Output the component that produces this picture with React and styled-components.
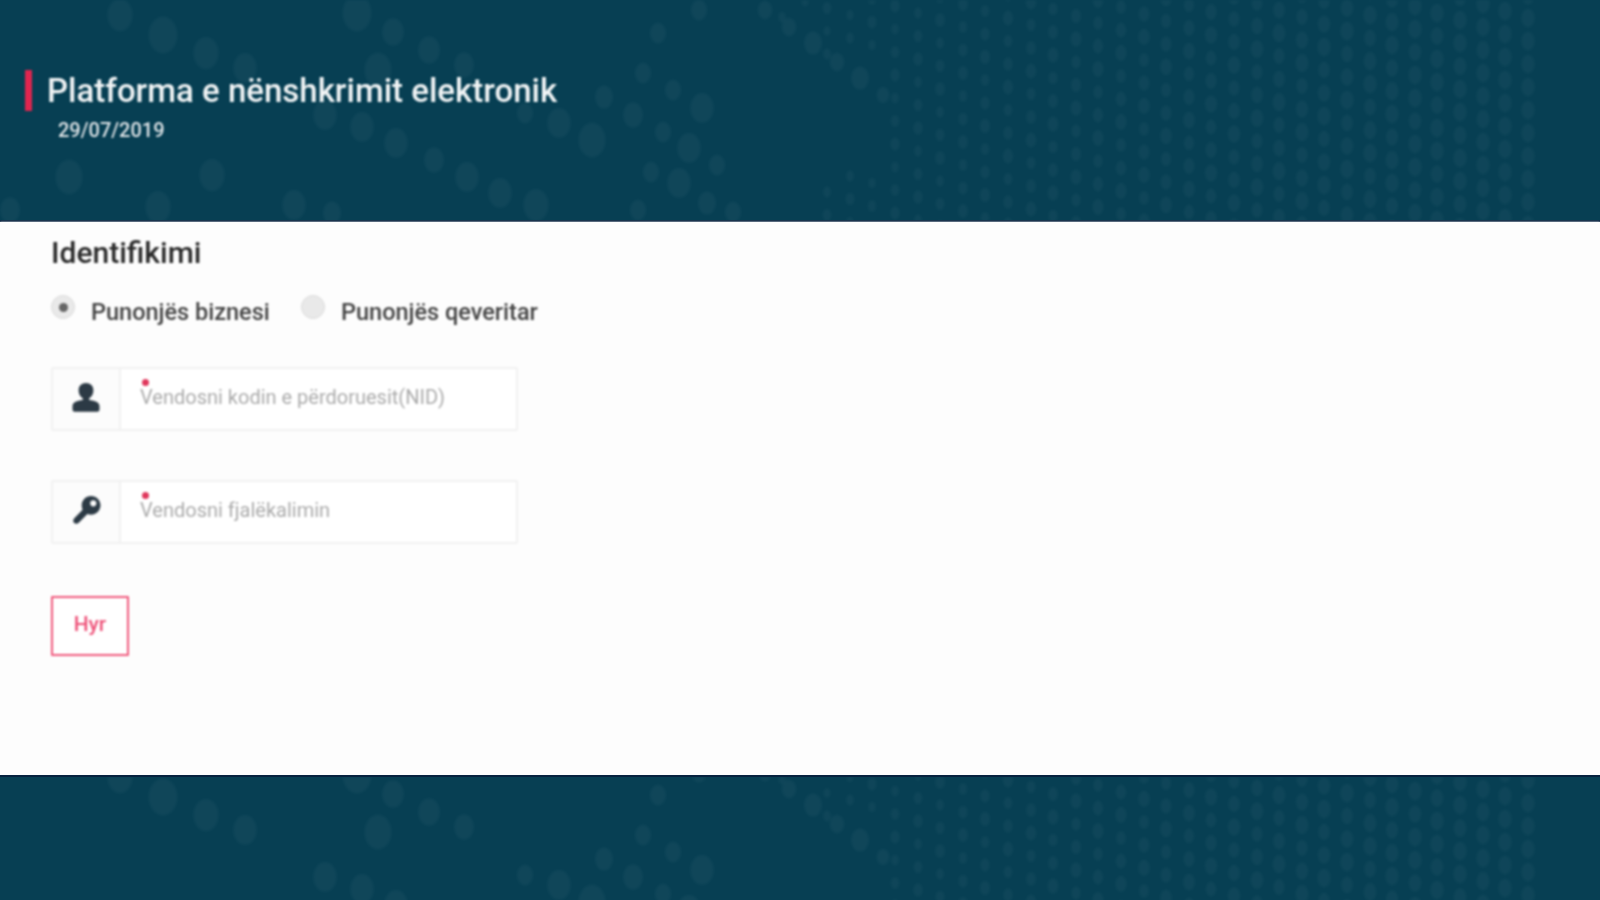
import React from "react";
import styled, { createGlobalStyle } from "styled-components";

const GlobalStyle = createGlobalStyle`
  html, body {
    margin: 0;
    padding: 0;
    height: 100%;
    background: #fdfdfd;
    font-family: Roboto, "Liberation Sans", sans-serif;
  }
`;

const Page = styled.div`
  display: flex;
  flex-direction: column;
  height: 900px;
  overflow: hidden;
`;

const Band = styled.div`
  position: relative;
  flex: none;
  box-sizing: border-box;
  height: ${(props) => props.$height}px;
  overflow: hidden;
  background-color: #073f53;
  ${(props) => props.$edge}: 2px solid #06223f;
`;

const Dots = styled.svg`
  position: absolute;
  top: 0;
  left: 0;
  width: 1600px;
  height: 240px;
  filter: blur(1.5px);
`;

const Heading = styled.div`
  position: relative;
  padding: 70px 0 0 25px;
  filter: blur(0.8px);
`;

const TitleRow = styled.div`
  display: flex;
  align-items: center;
  height: 41px;
  border-left: 7px solid #e0254f;
  padding-left: 15px;
`;

const Title = styled.h1`
  margin: 0;
  font-size: 33px;
  line-height: 38px;
  font-weight: 500;
  color: #f2f5f6;
  white-space: nowrap;
`;

const DateText = styled.div`
  margin: 8px 0 0 33px;
  font-size: 20px;
  line-height: 22px;
  font-weight: 500;
  color: #dfe5e8;
`;

const Main = styled.main`
  flex: 1;
  padding: 14px 0 0 51px;
  background: #fdfdfd;
  filter: blur(0.8px);
`;

const SectionTitle = styled.h2`
  margin: 0;
  font-size: 30px;
  line-height: 34px;
  font-weight: 500;
  color: #2a2a2a;
`;

const RadioRow = styled.div`
  display: flex;
  margin-top: 25px;
  height: 33px;
`;

const RadioLabel = styled.label`
  display: flex;
  align-items: flex-start;
  width: ${(props) => props.$width}px;
  font-size: 23.5px;
  line-height: 28px;
  font-weight: 500;
  color: #444;
`;

const RadioDot = styled.span`
  flex: none;
  width: 24px;
  height: 24px;
  margin: 0 16px 0 0;
  box-sizing: border-box;
  border-radius: 50%;
  border: 1px solid #dcdcdc;
  background: #e9e9e9;
  display: flex;
  align-items: center;
  justify-content: center;
  &::after {
    content: "";
    display: ${(props) => (props.$checked ? "block" : "none")};
    width: 9px;
    height: 9px;
    border-radius: 50%;
    background: #666;
  }
`;

const RadioText = styled.span`
  margin-top: 3px;
`;

const Fields = styled.div`
  display: flex;
  flex-direction: column;
  gap: 49px;
  margin-top: 39px;
`;

const Field = styled.div`
  display: flex;
  width: 467px;
  height: 64px;
  box-sizing: border-box;
  border: 2px solid #f1f1f1;
  border-radius: 2px;
  background: #fff;
`;

const Addon = styled.div`
  flex: none;
  width: 68px;
  display: flex;
  align-items: center;
  justify-content: center;
  padding-bottom: 4px;
  box-sizing: border-box;
  border-right: 2px solid #f1f1f1;
  background: #fcfcfc;
  color: #2c3a45;
`;

const FieldBody = styled.div`
  position: relative;
  flex: 1;
  padding: 15px 0 0 19px;
`;

const FieldLabel = styled.label`
  display: block;
  font-size: 20px;
  line-height: 26px;
  color: #ababab;
`;

const Star = styled.span`
  position: absolute;
  left: 21px;
  top: 10px;
  width: 7px;
  height: 7px;
  border-radius: 50%;
  background: #e0375c;
`;

const LoginButton = styled.button`
  display: block;
  margin-top: 52px;
  width: 78px;
  height: 60px;
  padding: 0 0 4px;
  border: 2px solid #f0587c;
  border-radius: 1px;
  background: #fff;
  font-family: inherit;
  font-size: 21px;
  font-weight: 500;
  color: #ee5178;
`;

// big loose dots on the left of the banner art: x, y, radius
const LOOSE_DOTS = [
  [120, 15, 14], [163, 35, 16], [206, 53, 14], [245, 68, 13], [357, 13, 16],
  [393, 32, 12], [429, 50, 12], [464, 65, 11], [378, 70, 15], [325, 115, 13],
  [362, 127, 13], [396, 143, 13], [434, 160, 11], [467, 177, 13], [500, 193, 13],
  [536, 205, 14], [69, 177, 15], [212, 175, 14], [158, 207, 14], [294, 205, 13],
  [332, 213, 10], [10, 210, 11], [643, 73, 9], [604, 97, 10], [673, 90, 9],
  [633, 115, 11], [702, 108, 13], [663, 132, 9], [559, 123, 13], [592, 140, 15],
  [525, 113, 9], [689, 148, 13], [717, 165, 9], [651, 172, 9], [679, 183, 13],
  [707, 203, 10], [638, 210, 9], [733, 212, 9], [658, 33, 9], [699, 10, 9],
  [765, 10, 8], [789, 27, 8], [813, 43, 10], [837, 62, 8], [860, 78, 10], [883, 95, 7],
];

// denser small dots that fill the right side, growing a little toward the edge
function denseDots() {
  const out = [];
  for (let col = 0; col < 34; col++) {
    const x = 782 + col * 22.6;
    for (let row = -1; row < 11; row++) {
      const y = row * 23 + ((col * 7) % 23) - 6;
      // diagonal gap left of the dense area, mid-height
      if (x < 890 && y > 60 && y < 175) continue;
      if (x < 810 && y > 20) continue;
      const r = Math.min(8, 4 + col * 0.12 + ((col + row) % 3) * 0.5);
      out.push([Math.round(x), y, r]);
    }
  }
  return out;
}

const DENSE = denseDots();

function DotArt({ shift }) {
  return (
    <Dots viewBox="0 0 1600 240" aria-hidden="true">
      {LOOSE_DOTS.map(([x, y, r], i) => (
        <ellipse key={i} cx={x} cy={y + shift} rx={r * 0.9} ry={r * 1.15} fill="#ffffff" fillOpacity="0.04" />
      ))}
      {DENSE.map(([x, y, r], i) => (
        <ellipse key={i} cx={x} cy={y + shift} rx={r * 0.85} ry={r * 1.2} fill="#ffffff" fillOpacity="0.035" />
      ))}
    </Dots>
  );
}

function PersonIcon() {
  return (
    <svg width="28" height="29" viewBox="0 0 28 29" fill="currentColor" aria-hidden="true">
      <path d="M14 0c4.400 0 7.400 3.100 7.400 7.200 0 3.700-1.800 6.800-4.200 8.100v1.600c3.800.5 10.300 1.600 10.300 6v3.700c0 1.300-.9 2.200-2 2.200H2.500c-1.100 0-2-.9-2-2.200v-3.700c0-4.400 6.500-5.500 10.300-6v-1.600C8.400 14 6.600 10.900 6.600 7.200 6.600 3.100 9.600 0 14 0z" />
    </svg>
  );
}

function KeyIcon() {
  return (
    <svg width="29" height="28" viewBox="0 0 29 28" fill="currentColor" aria-hidden="true">
      <path
        fillRule="evenodd"
        d="M19 0c5.300 0 9.500 4.200 9.500 9.300S24.300 18.800 19 18.800c-1.300 0-2.500-.3-3.600-.7L7 26.500c-1.400 1.400-3.400 1.700-4.800.5-1.400-1.300-1.300-3.400.1-4.800l8.300-8.400c-.6-1.300-.9-2.700-.9-4.300C9.700 4.200 13.800 0 19 0zm2.300 4.200a3.100 3.100 0 1 0 0 6.200 3.100 3.100 0 0 0 0-6.200z"
      />
    </svg>
  );
}

export default function App() {
  return (
    <Page>
      <GlobalStyle />
      <Band $height={222} $edge="border-bottom">
        <DotArt shift={0} />
        <Heading>
          <TitleRow>
            <Title>Platforma e nënshkrimit elektronik</Title>
          </TitleRow>
          <DateText>29/07/2019</DateText>
        </Heading>
      </Band>

      <Main>
        <SectionTitle>Identifikimi</SectionTitle>
        <RadioRow>
          <RadioLabel $width={250}>
            <RadioDot $checked />
            <RadioText>Punonjës biznesi</RadioText>
          </RadioLabel>
          <RadioLabel $width={270}>
            <RadioDot />
            <RadioText>Punonjës qeveritar</RadioText>
          </RadioLabel>
        </RadioRow>

        <Fields>
          <Field>
            <Addon>
              <PersonIcon />
            </Addon>
            <FieldBody>
              <Star />
              <FieldLabel>Vendosni kodin e përdoruesit(NID)</FieldLabel>
            </FieldBody>
          </Field>
          <Field>
            <Addon>
              <KeyIcon />
            </Addon>
            <FieldBody>
              <Star />
              <FieldLabel>Vendosni fjalëkalimin</FieldLabel>
            </FieldBody>
          </Field>
        </Fields>

        <LoginButton>Hyr</LoginButton>
      </Main>

      <Band $height={125} $edge="border-top">
        <DotArt shift={-15} />
      </Band>
    </Page>
  );
}
